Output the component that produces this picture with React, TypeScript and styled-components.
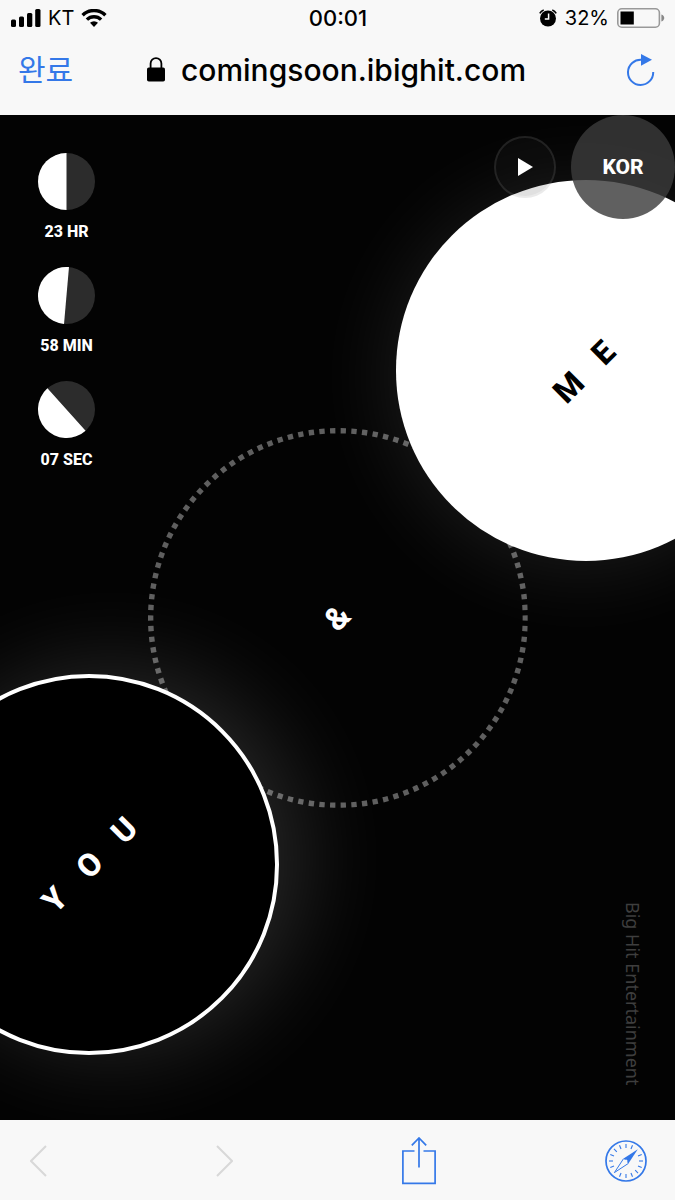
import React from "react";
import styled, { createGlobalStyle } from "styled-components";

const GlobalStyle = createGlobalStyle`
  *, *::before, *::after { box-sizing: border-box; }
  body { margin: 0; background: #f8f8f8; }
`;

const BLUE = "#3478e8";

const Page = styled.div`
  display: flex;
  flex-direction: column;
  min-height: 100vh;
  color: #000;
  font-family: Inter, "Noto Sans CJK KR", sans-serif;
`;

const Header = styled.header`
  background: #f8f8f8;
  padding-bottom: 12px;
`;

const StatusBar = styled.div`
  display: grid;
  grid-template-columns: 1fr auto 1fr;
  align-items: center;
  height: 36px;
  padding: 0 10px 0 11px;
  font-size: 20px;
  line-height: 24px;
`;

const StatusGroup = styled.div<{ $end?: boolean; $gap: number }>`
  display: flex;
  align-items: center;
  justify-content: ${(p) => (p.$end ? "flex-end" : "flex-start")};
  gap: ${(p) => p.$gap}px;
`;

const Clock = styled.time`
  font-size: 22px;
  font-weight: 500;
`;

const NavBar = styled.nav`
  display: grid;
  grid-template-columns: 1fr auto 1fr;
  align-items: center;
  height: 67px;
  padding: 0 20px 0 18px;
`;

const PlainButton = styled.button`
  display: flex;
  align-items: center;
  padding: 0;
  border: 0;
  background: none;
  color: ${BLUE};
  cursor: pointer;

  &:disabled { color: #d8d8d8; cursor: default; }
`;

const DoneButton = styled(PlainButton)`
  justify-self: start;
  font-family: "Noto Sans CJK KR", sans-serif;
  font-size: 30px;
  font-weight: 400;
  line-height: 40px;
  margin-bottom: 4px;
`;

const ReloadButton = styled(PlainButton)`
  justify-self: end;
`;

const Address = styled.div`
  display: flex;
  align-items: center;
  gap: 16px;
  font-size: 30px;
  font-weight: 500;
  line-height: 36px;
`;

const Stage = styled.main`
  position: relative;
  flex: 1;
  min-height: 800px;
  overflow: hidden;
  background: #030303;
  color: #fff;
  font-family: Roboto, sans-serif;
`;

const Orb = styled.section`
  position: absolute;
  display: flex;
  align-items: center;
  justify-content: center;
  width: 56.4%;
  aspect-ratio: 1;
  border-radius: 50%;
`;

const Orbit = styled(Orb)`
  top: 50%;
  left: 50%;
  transform: translate(-50%, -50%);
`;

const OrbitRing = styled.svg`
  position: absolute;
  inset: 0;
  width: 100%;
  height: 100%;
`;

const MeOrb = styled(Orb)`
  top: 65px;
  right: -15%;
  background: #fff;
  color: #000;
  box-shadow: -4px 6px 90px rgba(255, 255, 255, 0.11);
`;

const YouOrb = styled(Orb)`
  bottom: 65px;
  left: -15%;
  background: #000;
  border: 4px solid #fff;
  box-shadow: 22px -6px 100px rgba(255, 255, 255, 0.16);
`;

const OrbWord = styled.h2`
  display: flex;
  gap: 28px;
  margin: 0;
  font-size: 32px;
  font-weight: 800;
  line-height: 32px;
  transform: rotate(-45deg);
`;

const Letter = styled.span`
  width: 21px;
  display: flex;
  justify-content: center;
`;

const Countdown = styled.ul`
  position: relative;
  display: inline-flex;
  flex-direction: column;
  gap: 25px;
  margin: 38px 0 0 38px;
  padding: 0;
  list-style: none;
`;

const CountdownItem = styled.li`
  display: flex;
  flex-direction: column;
  align-items: center;
  gap: 11px;
  width: 57px;
  font-size: 16px;
  font-weight: 800;
  line-height: 21px;
  white-space: nowrap;
`;

const Controls = styled.div`
  position: absolute;
  top: 0;
  right: 0;
  display: flex;
  align-items: center;
  gap: 15px;
`;

const RoundButton = styled.button`
  display: flex;
  align-items: center;
  justify-content: center;
  padding: 0;
  border: 0;
  border-radius: 50%;
  color: #fff;
  cursor: pointer;
`;

const PlayButton = styled(RoundButton)`
  width: 62px;
  height: 62px;
  border: 2px solid rgba(150, 150, 150, 0.2);
  background: rgba(45, 45, 45, 0.15);
  background-clip: padding-box;
`;

const LanguageButton = styled(RoundButton)`
  width: 104px;
  height: 104px;
  background: rgba(59, 59, 59, 0.81);
  font-family: Roboto, sans-serif;
  font-size: 21px;
  font-weight: 800;
  line-height: 24px;
`;

const Credit = styled.p`
  position: absolute;
  right: 31px;
  bottom: 35px;
  margin: 0;
  writing-mode: vertical-rl;
  color: #3e3e3e;
  font-family: "Noto Sans", sans-serif;
  font-size: 18px;
  line-height: 22px;
`;

const Toolbar = styled.footer`
  display: flex;
  align-items: center;
  justify-content: space-between;
  height: 80px;
  padding: 2px 28px 0 30px;
  background: #f8f8f8;
`;

const Moon = ({ angle }: { angle: number }) => (
  <svg width="57" height="57" viewBox="0 0 57 57" aria-hidden="true">
    <circle cx="28.5" cy="28.5" r="28.5" fill="#2c2c2c" />
    <path d="M28.5 0a28.5 28.5 0 0 0 0 57z" fill="#fff" transform={`rotate(${angle} 28.5 28.5)`} />
  </svg>
);

const Word = ({ text }: { text: string }) => (
  <OrbWord>
    {text.split("").map((letter, i) => (
      <Letter key={i}>{letter}</Letter>
    ))}
  </OrbWord>
);

const SignalIcon = () => (
  <svg width="30" height="18" viewBox="0 0 30 18" aria-hidden="true">
    <rect x="0" y="10.5" width="5" height="7.5" rx="1.5" />
    <rect x="8" y="7.5" width="5" height="10.5" rx="1.5" />
    <rect x="16" y="4" width="5.3" height="14" rx="1.5" />
    <rect x="24.2" y="0" width="5.3" height="18" rx="1.5" />
  </svg>
);

const WifiIcon = () => (
  <svg width="26" height="18" viewBox="0 0 26 18" fill="none" stroke="#000" strokeWidth="3.4" aria-hidden="true">
    <path d="M1.6 6.2a16.2 16.2 0 0 1 22.8 0" />
    <path d="M5.9 10.6a10.1 10.1 0 0 1 14.2 0" />
    <path d="M13 18l-4-4.2a5.8 5.8 0 0 1 8 0z" fill="#000" stroke="none" />
  </svg>
);

const AlarmIcon = () => (
  <svg width="18" height="18" viewBox="0 0 18 18" aria-hidden="true">
    <circle cx="9" cy="9.5" r="8" />
    <path d="M.8 4.4A7 7 0 0 1 4.7 1M17.2 4.4A7 7 0 0 0 13.3 1" fill="none" stroke="#000" strokeWidth="1.6" />
    <path d="M9.6 4.6v5.3H5.8" fill="none" stroke="#fff" strokeWidth="1.5" />
  </svg>
);

const BatteryIcon = () => (
  <svg width="48" height="20" viewBox="0 0 48 20" aria-hidden="true">
    <rect x=".8" y=".8" width="41.6" height="18.4" rx="4" fill="none" stroke="#999" strokeWidth="1.6" />
    <rect x="3.5" y="3.5" width="13.3" height="13" />
    <path d="M44.4 6.5c3.8 1.2 3.8 5.8 0 7z" fill="#888" />
  </svg>
);

const LockIcon = () => (
  <svg width="18" height="25" viewBox="0 0 18 25" aria-hidden="true">
    <rect x="0" y="10.5" width="18" height="14" rx="1.8" />
    <path d="M3.6 11V6.5a5.4 5.4 0 0 1 10.8 0V11" fill="none" stroke="#000" strokeWidth="1.8" />
  </svg>
);

const ReloadIcon = () => (
  <svg width="28" height="32" viewBox="0 0 28 32" aria-hidden="true">
    <path d="M26.2 18A12.6 12.6 0 1 1 14.5 5.8" fill="none" stroke="currentColor" strokeWidth="2" />
    <path d="M14 0l11 5.8-11 6z" fill="currentColor" />
  </svg>
);

const ChevronIcon = ({ forward }: { forward?: boolean }) => (
  <svg width="17" height="32" viewBox="0 0 17 32" fill="none" stroke="currentColor" strokeWidth="2" aria-hidden="true">
    <path d={forward ? "M1 1l15 15L1 31" : "M16 1L1 16l15 15"} />
  </svg>
);

const ShareIcon = () => (
  <svg width="35" height="48" viewBox="0 0 35 48" fill="none" stroke="currentColor" strokeWidth="1.7" aria-hidden="true">
    <path d="M13.5 14H1.9v32.4h32.2V14H22.5M18 .9V30.5M10.8 8.3L18 1l7.2 7.3" />
  </svg>
);

const CompassIcon = () => (
  <svg width="42" height="42" viewBox="0 0 42 42" fill="none" stroke="currentColor" aria-hidden="true">
    <circle cx="21" cy="21" r="20" strokeWidth="1.7" />
    <g strokeWidth="1.1">
      {Array.from({ length: 16 }, (_, i) => i)
        .filter((i) => i !== 2 && i !== 10)
        .map((i) => (
          <path key={i} d="M21 4v4" transform={`rotate(${i * 22.5} 21 21)`} />
        ))}
    </g>
    <path d="M32.8 9.2L23.4 23.4l-4.8-4.8z" fill="currentColor" stroke="none" />
    <path d="M18.6 18.6L9.4 32.6l14-9.2" strokeWidth="1" />
    <circle cx="21" cy="21" r="1.5" fill="#f8f8f8" stroke="none" />
  </svg>
);

const phases = [
  { label: "23 HR", angle: 0 },
  { label: "58 MIN", angle: 5 },
  { label: "07 SEC", angle: -42 },
];

export default function App() {
  return (
    <Page>
      <GlobalStyle />
      <Header>
        <StatusBar>
          <StatusGroup $gap={7}>
            <SignalIcon />
            <span>KT</span>
            <WifiIcon />
          </StatusGroup>
          <Clock>00:01</Clock>
          <StatusGroup $end $gap={8}>
            <AlarmIcon />
            <span>32%</span>
            <BatteryIcon />
          </StatusGroup>
        </StatusBar>
        <NavBar>
          <DoneButton type="button">완료</DoneButton>
          <Address>
            <LockIcon />
            <span>comingsoon.ibighit.com</span>
          </Address>
          <ReloadButton type="button" aria-label="Reload">
            <ReloadIcon />
          </ReloadButton>
        </NavBar>
      </Header>

      <Stage>
        <Orbit>
          <OrbitRing viewBox="0 0 380 380" aria-hidden="true">
            <circle
              cx="190"
              cy="190"
              r="187"
              fill="none"
              stroke="#5f5f5f"
              strokeWidth="5.4"
              pathLength={220}
              strokeDasharray="1 1"
              strokeDashoffset="0.5"
            />
          </OrbitRing>
          <Word text="&" />
        </Orbit>
        <MeOrb>
          <Word text="ME" />
        </MeOrb>
        <YouOrb>
          <Word text="YOU" />
        </YouOrb>

        <Countdown>
          {phases.map((phase) => (
            <CountdownItem key={phase.label}>
              <Moon angle={phase.angle} />
              <span>{phase.label}</span>
            </CountdownItem>
          ))}
        </Countdown>

        <Controls>
          <PlayButton type="button" aria-label="Play">
            <svg width="15" height="18" viewBox="0 0 15 18" fill="#fff" aria-hidden="true">
              <path d="M0 0l15 9-15 9z" />
            </svg>
          </PlayButton>
          <LanguageButton type="button">KOR</LanguageButton>
        </Controls>

        <Credit>Big Hit Entertainment</Credit>
      </Stage>

      <Toolbar>
        <PlainButton type="button" aria-label="Back" disabled>
          <ChevronIcon />
        </PlainButton>
        <PlainButton type="button" aria-label="Forward" disabled>
          <ChevronIcon forward />
        </PlainButton>
        <PlainButton type="button" aria-label="Share">
          <ShareIcon />
        </PlainButton>
        <PlainButton type="button" aria-label="Open in Safari">
          <CompassIcon />
        </PlainButton>
      </Toolbar>
    </Page>
  );
}
